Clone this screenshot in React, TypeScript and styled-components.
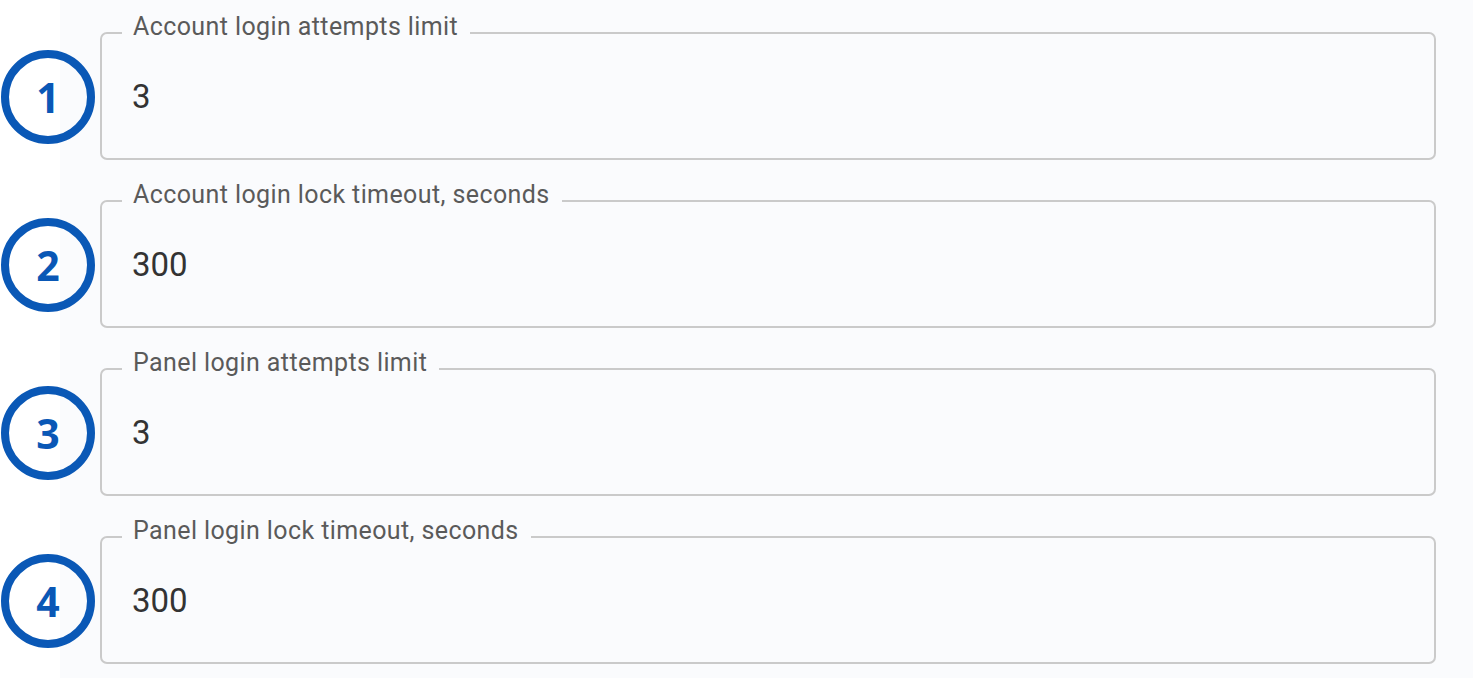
import styled, { createGlobalStyle } from "styled-components";

const GlobalStyle = createGlobalStyle`
  html, body {
    margin: 0;
    padding: 0;
    background: #ffffff;
  }
  body {
    font-family: Roboto, "Liberation Sans", sans-serif;
  }
`;

const Page = styled.div`
  width: 1473px;
  height: 678px;
  box-sizing: border-box;
  padding-top: 14px;
  background: linear-gradient(to right, #ffffff 60px, #fafbfd 60px);
  display: flex;
  flex-direction: column;
  gap: 22px;
  overflow: hidden;
`;

const Row = styled.div`
  display: flex;
  align-items: flex-start;
`;

const Marker = styled.div`
  flex: 0 0 auto;
  width: 94px;
  height: 94px;
  margin: 36px 5px 0 1px;
  box-sizing: border-box;
  border: 8px solid #0a58b6;
  border-radius: 50%;
  display: flex;
  align-items: center;
  justify-content: center;
  color: #0a58b6;
  font-family: "Open Sans", "Noto Sans", sans-serif;
  font-weight: 700;
  font-size: 41px;
  line-height: 1;
`;

const Field = styled.fieldset`
  flex: 0 0 auto;
  width: 1336px;
  box-sizing: border-box;
  margin: 0;
  padding: 28px 30px 45px 30px;
  border: 2px solid #cacaca;
  border-radius: 7px;
`;

const Label = styled.legend`
  margin-left: -10px;
  padding: 0 12px 13px 11px;
  font-size: 25px;
  line-height: 25px;
  letter-spacing: 0.4px;
  color: #5a5a5a;
`;

const Value = styled.div`
  font-size: 33px;
  line-height: 33px;
  color: #333333;
`;

const settings = [
  { label: "Account login attempts limit", value: "3" },
  { label: "Account login lock timeout, seconds", value: "300" },
  { label: "Panel login attempts limit", value: "3" },
  { label: "Panel login lock timeout, seconds", value: "300" },
];

export default function App() {
  return (
    <>
      <GlobalStyle />
      <Page>
        {settings.map((s, i) => (
          <Row key={s.label}>
            <Marker>{i + 1}</Marker>
            <Field>
              <Label>{s.label}</Label>
              <Value>{s.value}</Value>
            </Field>
          </Row>
        ))}
      </Page>
    </>
  );
}
